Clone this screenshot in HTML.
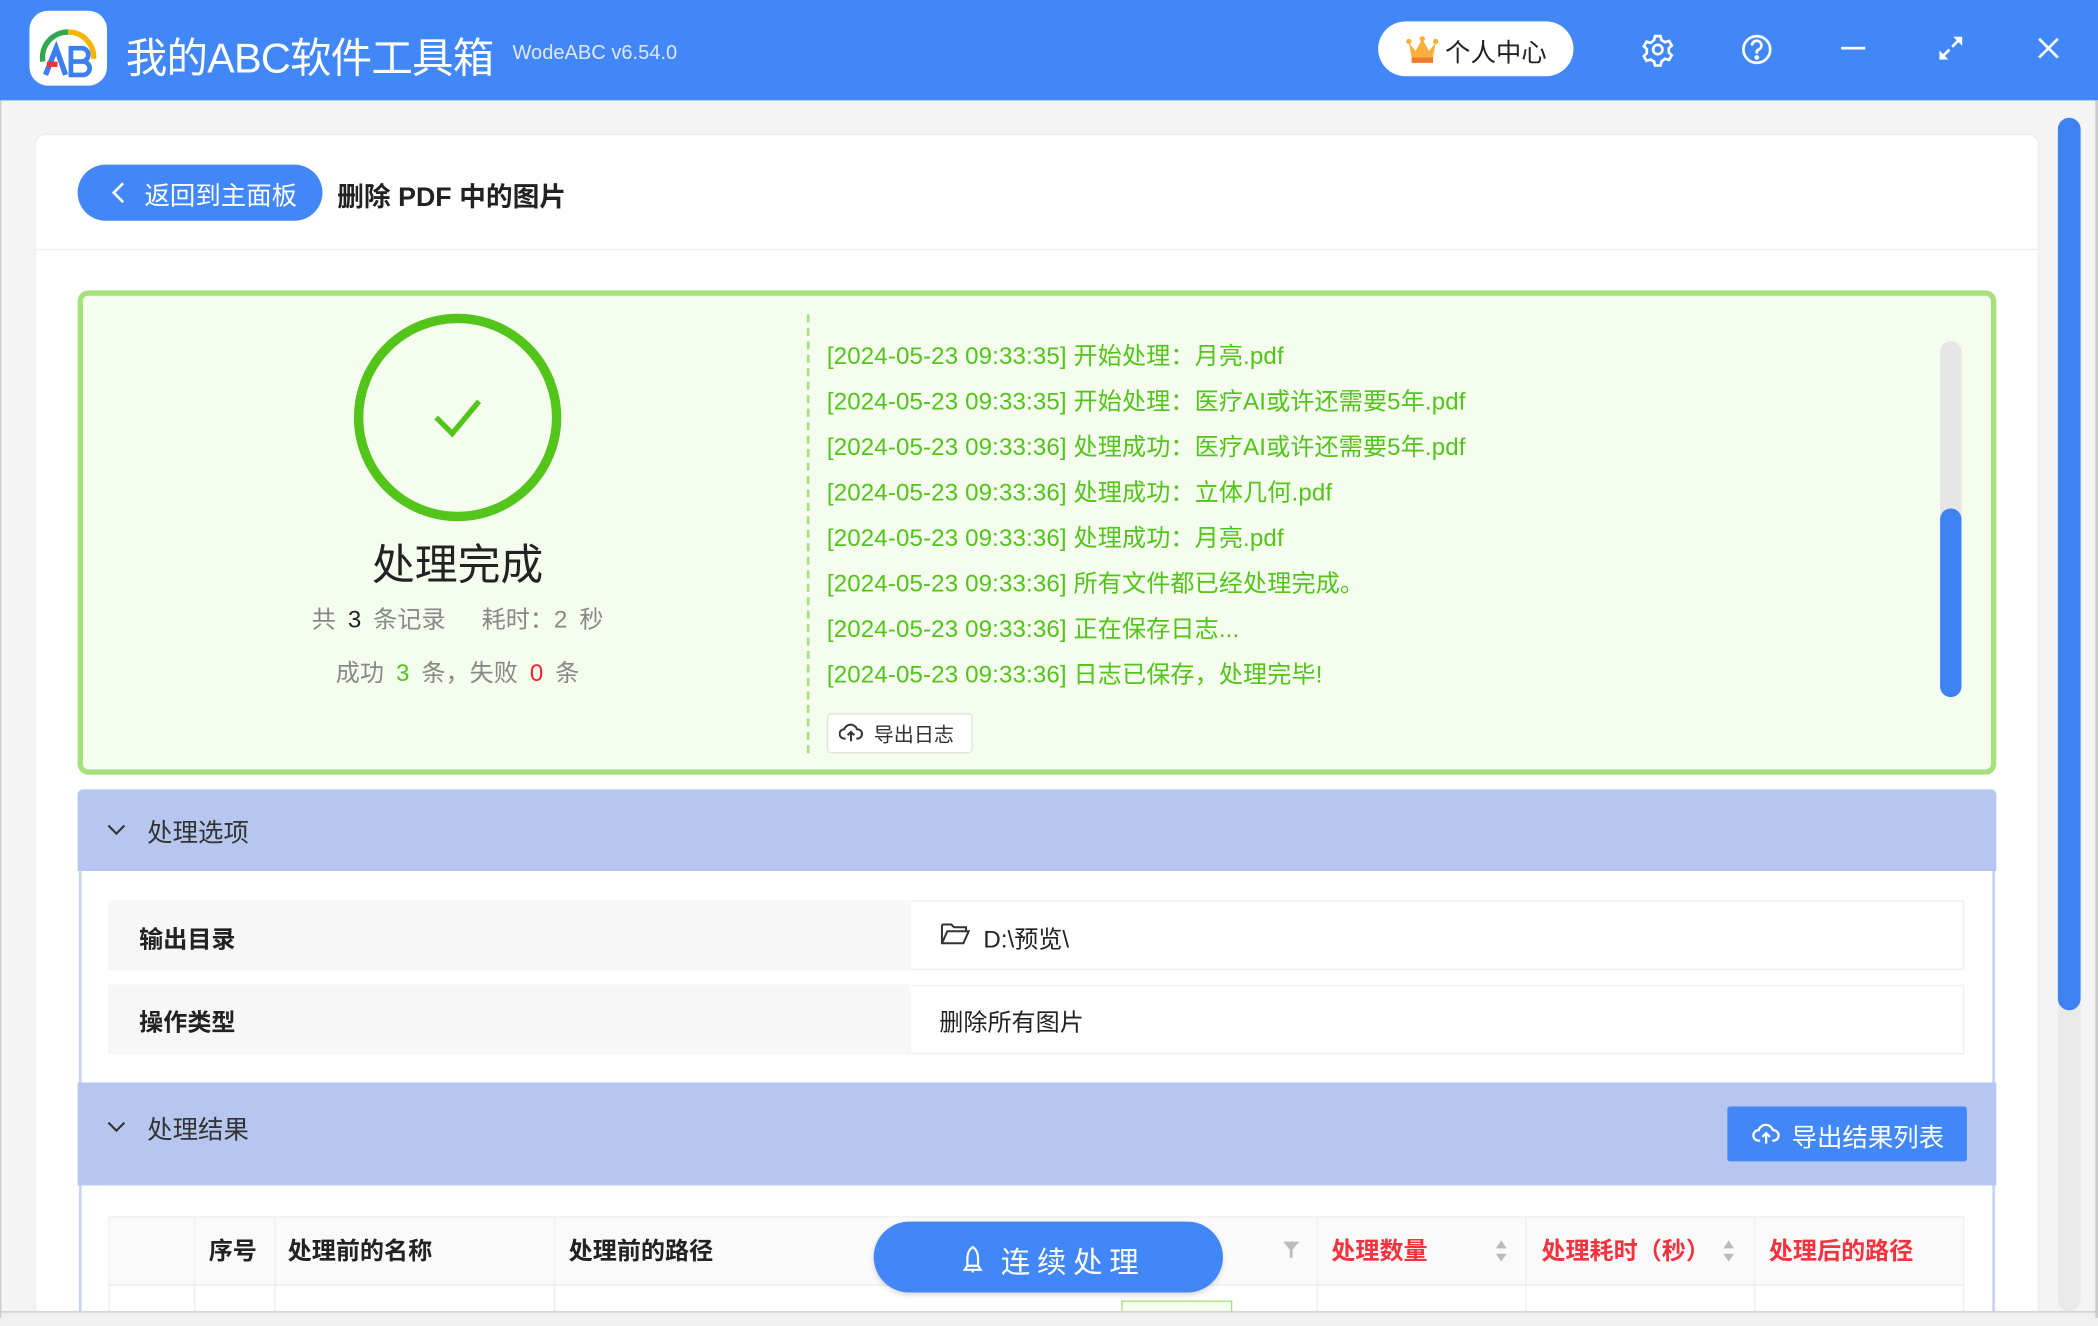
<!DOCTYPE html>
<html><head><meta charset="utf-8"><style>
*{box-sizing:border-box;margin:0;padding:0}
html,body{width:2098px;height:1326px;overflow:hidden;background:#d8d8d8}
#w{position:absolute;left:0;top:0;width:1568px;height:991px;transform:scale(1.338);transform-origin:0 0;font-family:"Liberation Sans","Noto Sans CJK SC",sans-serif;background:#f4f4f4;overflow:hidden}
.a{position:absolute}
.t{white-space:nowrap}
.log{position:absolute;left:618px;color:#52c41a;font-size:18px;white-space:nowrap;letter-spacing:0.1px}
.hd{position:absolute;left:58px;width:1434px;background:#b7c6ef}
.th{position:absolute;top:909px;height:52px;line-height:52px;font-size:18px;font-weight:bold;color:#222;white-space:nowrap}
</style></head><body><div id="w">
<!-- title bar -->
<div class="a" style="left:0;top:0;width:1568px;height:75px;background:#4287f7"></div>
<div class="a" style="left:22px;top:8px;width:58px;height:56px;background:#fff;border-radius:14px"></div>
<svg class="a" style="left:22px;top:8px" width="58" height="56" viewBox="0 0 58 56">
<path d="M10 38 A19 19 0 0 1 29 16" stroke="#2fa84f" stroke-width="4" fill="none"/>
<path d="M29 16 A19 19 0 0 1 48 36" stroke="#f7b500" stroke-width="4" fill="none"/>
<path d="M12 48 L20 28 L27 48" stroke="#3b7ff0" stroke-width="4" fill="none"/>
<rect x="13" y="38" width="8" height="4" fill="#e53935"/>
<path d="M31 28 h8 a5 5 0 0 1 0 10 h-8 z M31 38 h9 a5 5 0 0 1 0 10 h-9 z" stroke="#3b7ff0" stroke-width="3.5" fill="none"/>
</svg>
<div class="a t" style="left:94px;top:18px;font-size:31px;color:#fff;letter-spacing:-0.6px">我的ABC软件工具箱</div>
<div class="a t" style="left:383px;top:31px;font-size:15px;color:#dfe8ff">WodeABC v6.54.0</div>
<div class="a" style="left:1030px;top:16px;width:146px;height:41px;background:#fff;border-radius:21px"></div>
<svg class="a" style="left:1050px;top:26px" width="26" height="22" viewBox="0 0 26 22"><path d="M3 6 L8 12 L13 3 L18 12 L23 6 L21 17 H5 Z" fill="#fbb03b"/><rect x="5" y="17" width="16" height="4" fill="#f0782a"/><circle cx="3" cy="5" r="2" fill="#fbb03b"/><circle cx="23" cy="5" r="2" fill="#fbb03b"/><circle cx="13" cy="3" r="2" fill="#fbb03b"/></svg>
<div class="a t" style="left:1080px;top:25px;font-size:19px;color:#222">个人中心</div>
<svg class="a" style="left:1226px;top:24px" width="26" height="26" viewBox="0 0 26 26" fill="none" stroke="#fff" stroke-width="2"><circle cx="13" cy="13" r="3.5"/><path d="M11 3h4l.8 3 2.6 1.5 3-.9 2 3.4-2.2 2.2v3l2.2 2.2-2 3.4-3-.9L15.8 22 15 25h-4l-.8-3-2.6-1.5-3 .9-2-3.4L4.8 15.8v-3L2.6 10.6l2-3.4 3 .9L10.2 6z"/></svg>
<svg class="a" style="left:1300px;top:24px" width="26" height="26" viewBox="0 0 26 26" fill="none" stroke="#fff" stroke-width="2"><circle cx="13" cy="13" r="10"/><path d="M9.5 10a3.5 3.5 0 1 1 4.5 3.3c-.7.3-1 .8-1 1.7v1"/><circle cx="13" cy="19" r=".8" fill="#fff"/></svg>
<div class="a" style="left:1376px;top:35px;width:18px;height:2px;background:#fff"></div>
<svg class="a" style="left:1448px;top:26px" width="20" height="20" viewBox="0 0 20 20" stroke="#fff" stroke-width="2" fill="#fff"><path d="M11 9 L18 2 M2 18 L9 11"/><path d="M13 2h5v5z M2 13v5h5z" stroke-width="1"/></svg>
<svg class="a" style="left:1522px;top:27px" width="18" height="18" viewBox="0 0 18 18" stroke="#fff" stroke-width="2"><path d="M2 2L16 16M16 2L2 16"/></svg>
<!-- card -->
<div class="a" style="left:26px;top:100px;width:1498px;height:900px;background:#fff;border-radius:8px;border:1px solid #eee"></div>
<div class="a" style="left:58px;top:123px;width:183px;height:42px;background:#4287f7;border-radius:21px"></div>
<svg class="a" style="left:82px;top:136px" width="14" height="16" viewBox="0 0 14 16" fill="none" stroke="#fff" stroke-width="2"><path d="M10 1 L3 8 L10 15"/></svg>
<div class="a t" style="left:108px;top:132px;font-size:19px;color:#fff">返回到主面板</div>
<div class="a t" style="left:252px;top:131px;font-size:20px;font-weight:bold;color:#222">删除 PDF 中的图片</div>
<div class="a" style="left:27px;top:186px;width:1496px;height:1px;background:#eee"></div>
<!-- success panel -->
<div class="a" style="left:58px;top:217px;width:1434px;height:362px;background:#f5fdee;border:4px solid #a5e27c;border-radius:8px"></div>
<svg class="a" style="left:262px;top:232px" width="160" height="160" viewBox="0 0 160 160"><circle cx="80" cy="80" r="74" stroke="#52c41a" stroke-width="7" fill="none"/><path d="M64 80 L76 92 L96 68" stroke="#52c41a" stroke-width="4" fill="none"/></svg>
<div class="a t" style="left:242px;top:397px;width:200px;text-align:center;font-size:32px;color:#222">处理完成</div>
<div class="a t" style="left:192px;top:449px;width:300px;text-align:center;font-size:18px;color:#888;word-spacing:4px">共 <span style="color:#222">3</span> 条记录 &nbsp; 耗时：2 秒</div>
<div class="a t" style="left:192px;top:489px;width:300px;text-align:center;font-size:18px;color:#888;word-spacing:4px">成功 <span style="color:#52c41a">3</span> 条，失败 <span style="color:#f5222d">0</span> 条</div>
<div class="a" style="left:603px;top:235px;height:328px;border-left:2px dashed #a5e27c"></div>
<div class="log" style="top:252px">[2024-05-23 09:33:35] 开始处理：月亮.pdf</div>
<div class="log" style="top:286px">[2024-05-23 09:33:35] 开始处理：医疗AI或许还需要5年.pdf</div>
<div class="log" style="top:320px">[2024-05-23 09:33:36] 处理成功：医疗AI或许还需要5年.pdf</div>
<div class="log" style="top:354px">[2024-05-23 09:33:36] 处理成功：立体几何.pdf</div>
<div class="log" style="top:388px">[2024-05-23 09:33:36] 处理成功：月亮.pdf</div>
<div class="log" style="top:422px">[2024-05-23 09:33:36] 所有文件都已经处理完成。</div>
<div class="log" style="top:456px">[2024-05-23 09:33:36] 正在保存日志...</div>
<div class="log" style="top:490px">[2024-05-23 09:33:36] 日志已保存，处理完毕!</div>
<div class="a" style="left:618px;top:533px;width:109px;height:30px;background:#fff;border:1px solid #e2e2e2;border-radius:3px"></div>
<svg class="a" style="left:627px;top:540px" width="18" height="16" viewBox="0 0 18 16" fill="none" stroke="#333" stroke-width="1.5"><path d="M5 12H4a3.5 3.5 0 0 1 0-7 5 5 0 0 1 9.5 0A3.5 3.5 0 0 1 14 12h-1M9 14V7M6.5 9.5 9 7l2.5 2.5"/></svg>
<div class="a t" style="left:653px;top:538px;font-size:15px;color:#333">导出日志</div>
<div class="a" style="left:1450px;top:255px;width:16px;height:266px;background:#e6e6e6;border-radius:8px"></div>
<div class="a" style="left:1450px;top:380px;width:16px;height:141px;background:#3d82f0;border-radius:8px"></div>
<!-- options -->
<div class="hd" style="top:590px;height:61px;border-radius:4px 4px 0 0"></div>
<svg class="a" style="left:80px;top:614px" width="14" height="12" viewBox="0 0 14 12" fill="none" stroke="#333" stroke-width="1.6"><path d="M1 3 L7 9 L13 3"/></svg>
<div class="a t" style="left:110px;top:608px;font-size:19px;color:#333">处理选项</div>
<div class="a" style="left:59px;top:651px;width:1432px;height:158px;border-left:2px solid #c6d3f4;border-right:2px solid #c6d3f4;background:#fff"></div>
<div class="a" style="left:81px;top:673px;width:1387px;height:52px;border:1px solid #eee"></div>
<div class="a" style="left:81px;top:673px;width:600px;height:52px;background:#f7f7f7"></div>
<div class="a t" style="left:104px;top:688px;font-size:18px;font-weight:bold;color:#222">输出目录</div>
<svg class="a" style="left:703px;top:689px" width="22" height="18" viewBox="0 0 22 18" fill="none" stroke="#333" stroke-width="1.5"><path d="M1 2h7l2 2h9v3M1 2v14h16l4-9H5L1 16"/></svg>
<div class="a t" style="left:735px;top:688px;font-size:18px;color:#222">D:\预览\</div>
<div class="a" style="left:81px;top:736px;width:1387px;height:52px;border:1px solid #eee"></div>
<div class="a" style="left:81px;top:736px;width:600px;height:52px;background:#f7f7f7"></div>
<div class="a t" style="left:104px;top:750px;font-size:18px;font-weight:bold;color:#222">操作类型</div>
<div class="a t" style="left:702px;top:750px;font-size:18px;color:#222">删除所有图片</div>
<!-- results -->
<div class="hd" style="top:809px;height:77px"></div>
<svg class="a" style="left:80px;top:836px" width="14" height="12" viewBox="0 0 14 12" fill="none" stroke="#333" stroke-width="1.6"><path d="M1 3 L7 9 L13 3"/></svg>
<div class="a t" style="left:110px;top:830px;font-size:19px;color:#333">处理结果</div>
<div class="a" style="left:1291px;top:827px;width:179px;height:41px;background:#4287f7;border-radius:2px"></div>
<svg class="a" style="left:1309px;top:839px" width="22" height="18" viewBox="0 0 18 16" fill="none" stroke="#fff" stroke-width="1.5"><path d="M5 12H4a3.5 3.5 0 0 1 0-7 5 5 0 0 1 9.5 0A3.5 3.5 0 0 1 14 12h-1M9 14V7M6.5 9.5 9 7l2.5 2.5"/></svg>
<div class="a t" style="left:1339px;top:836px;font-size:19px;color:#fff">导出结果列表</div>
<div class="a" style="left:59px;top:886px;width:1432px;height:110px;border-left:2px solid #c6d3f4;border-right:2px solid #c6d3f4;background:#fff"></div>
<div class="a" style="left:81px;top:909px;width:1387px;height:90px;border:1px solid #eee"></div>
<div class="a" style="left:82px;top:910px;width:1385px;height:51px;background:#fafafa;border-bottom:1px solid #eee"></div>
<div class="a" style="left:145px;top:910px;width:1px;height:80px;background:#eee"></div>
<div class="a" style="left:205px;top:910px;width:1px;height:80px;background:#eee"></div>
<div class="a" style="left:414px;top:910px;width:1px;height:80px;background:#eee"></div>
<div class="a" style="left:984px;top:910px;width:1px;height:80px;background:#eee"></div>
<div class="a" style="left:1140px;top:910px;width:1px;height:80px;background:#eee"></div>
<div class="a" style="left:1311px;top:910px;width:1px;height:80px;background:#eee"></div>
<div class="th" style="left:156px">序号</div>
<div class="th" style="left:215px">处理前的名称</div>
<div class="th" style="left:425px">处理前的路径</div>
<svg class="a" style="left:958px;top:927px" width="14" height="14" viewBox="0 0 14 14"><path d="M1 1h12L8 7v6H6V7z" fill="#bbb"/></svg>
<div class="th" style="left:995px;color:#f5333f">处理数量</div>
<div class="th" style="left:1152px;color:#f5333f">处理耗时（秒）</div>
<div class="th" style="left:1322px;color:#f5333f">处理后的路径</div>
<svg class="a" style="left:1116px;top:926px" width="12" height="18" viewBox="0 0 12 18" fill="#bbb"><path d="M6 1l4 6H2zM6 17l4-6H2z"/></svg>
<svg class="a" style="left:1286px;top:926px" width="12" height="18" viewBox="0 0 12 18" fill="#bbb"><path d="M6 1l4 6H2zM6 17l4-6H2z"/></svg>
<div class="a" style="left:838px;top:972px;width:83px;height:20px;background:#f5fdee;border:1px solid #a5e27c"></div>
<div class="a" style="left:653px;top:913px;width:261px;height:53px;background:#4287f7;border-radius:27px;box-shadow:0 2px 4px rgba(0,0,0,.15)"></div>
<svg class="a" style="left:718px;top:930px" width="18" height="22" viewBox="0 0 18 22" fill="none" stroke="#fff" stroke-width="1.6"><path d="M9 2c3 2 4 5 4 9v5H5v-5c0-4 1-7 4-9zM5 16l-2 3h12l-2-3M9 19v2"/></svg>
<div class="a t" style="left:748px;top:926px;font-size:22px;color:#fff;letter-spacing:5px">连续处理</div>
<!-- right scrollbar -->
<div class="a" style="left:1538px;top:88px;width:17px;height:892px;background:#eaeaea;border-radius:9px"></div>
<div class="a" style="left:1538px;top:88px;width:17px;height:667px;background:#3d82f0;border-radius:9px"></div>
<div class="a" style="left:0;top:980px;width:1568px;height:11px;background:#f0f0f0;border-top:1px solid #ccc"></div>
<div class="a" style="left:0;top:75px;width:1px;height:910px;background:#ccc"></div>
<div class="a" style="left:1566px;top:75px;width:2px;height:910px;background:#ccc"></div>
</div></body></html>
